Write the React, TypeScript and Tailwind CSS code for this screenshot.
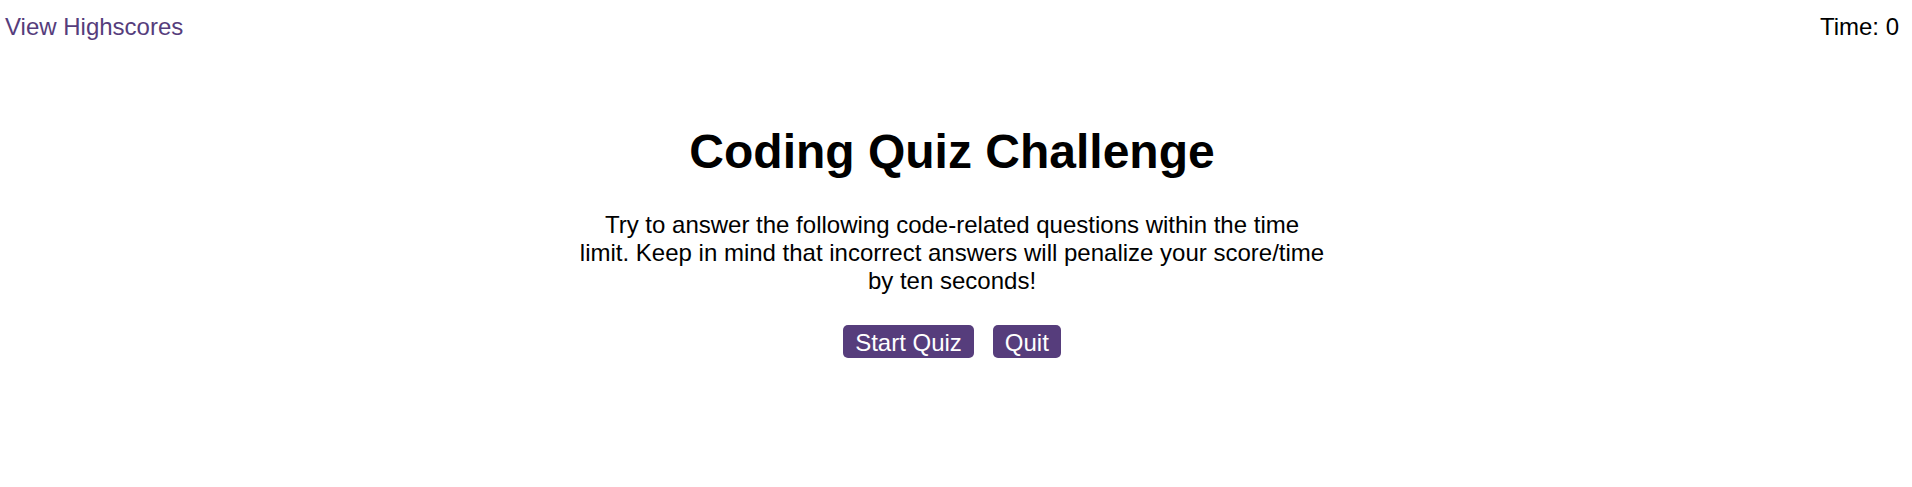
const font = "font-['Liberation_Sans',Arial,sans-serif]";

export default function App() {
  return (
    <div className={`min-h-screen bg-white pr-2 text-[24px] leading-[normal] text-black ${font}`}>
      <header className="flex items-start justify-between px-[5px] pt-[13px]">
        <a href="#" className="text-[#563d7c]">
          View Highscores
        </a>
        <span>Time: 0</span>
      </header>

      <main className="flex flex-col items-center">
        <h1 className="mt-[83px] text-[48px] font-bold leading-[normal]">
          Coding Quiz Challenge
        </h1>
        <p className="mt-[32px] w-[746px] text-center">
          Try to answer the following code-related questions within the time
          limit. Keep in mind that incorrect answers will penalize your
          score/time by ten seconds!
        </p>
        <div className="mt-[30px] flex gap-[19px]">
          <button className="rounded-[5px] bg-[#563d7c] px-3 pt-[4px] pb-[1px] text-white">
            Start Quiz
          </button>
          <button className="rounded-[5px] bg-[#563d7c] px-3 pt-[4px] pb-[1px] text-white">
            Quit
          </button>
        </div>
      </main>
    </div>
  );
}
